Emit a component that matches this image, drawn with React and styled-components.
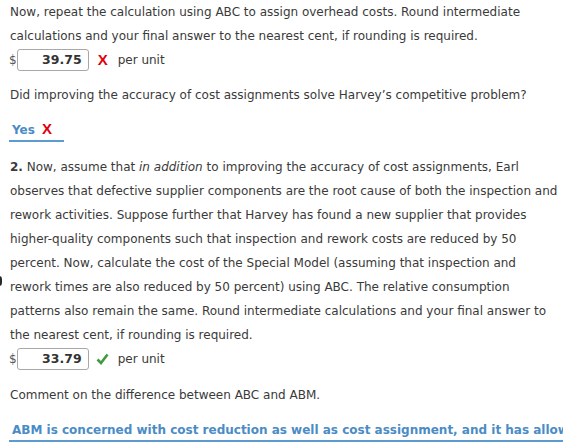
import React from "react";
import styled, { createGlobalStyle } from "styled-components";

const Global = createGlobalStyle`
  html, body { margin: 0; padding: 0; background: #fff; }
  body { overflow: hidden; }
`;

const Page = styled.div`
  position: relative;
  width: 563px;
  height: 447px;
  overflow: hidden;
  padding-left: 10px;
  box-sizing: border-box;
  font-family: "DejaVu Sans", Verdana, sans-serif;
  font-size: 12px;
  line-height: 24px;
  color: #3a3a3a;
`;

const Para = styled.p`
  margin: ${(p) => p.$mt || 0}px 0 0;
  white-space: nowrap;
`;

const AnswerRow = styled.div`
  display: flex;
  align-items: center;
  height: 24px;
  margin-left: -1px;
`;

const Dollar = styled.span`
  color: #555;
`;

const NumBox = styled.div`
  width: 70px;
  height: 20px;
  border: 1px solid #a8a8a8;
  border-radius: 3px;
  box-sizing: content-box;
  display: flex;
  align-items: center;
  justify-content: flex-end;
  font-weight: bold;
  font-size: 12.5px;
  color: #333;
  span { margin-right: 6px; }
`;

const Mark = styled.span`
  display: inline-flex;
  align-items: center;
  justify-content: center;
  width: ${(p) => p.$w || 14}px;
  margin-left: ${(p) => p.$ml || 7}px;
  color: #e0000b;
  font-family: "Liberation Sans", Arial, sans-serif;
  font-weight: bold;
  font-size: 15px;
`;

const Unit = styled.span`
  margin-left: 8px;
`;

const Choice = styled.div`
  margin-top: ${(p) => p.$mt || 0}px;
  margin-left: -1px;
  white-space: nowrap;
`;

const ChoiceText = styled.span`
  display: inline-block;
  line-height: 20px;
  padding: 0 ${(p) => p.$pr || 0}px 0 3px;
  border-bottom: 2px solid #5b9bd1;
  color: #4a8cc6;
  font-weight: bold;
  font-size: 12px;
`;

const Edge = styled.div`
  position: absolute;
  left: -4px;
  top: 276px;
  width: 6px;
  height: 10px;
  border-radius: 3px;
  background: #2a2a2a;
`;

const Check = () => (
  <svg width="13" height="12" viewBox="0 0 13 12">
    <path d="M1.5 6.5 L5 10 L11.5 1.5" fill="none" stroke="#3f9b3c" strokeWidth="2.6" strokeLinecap="butt" strokeLinejoin="miter" />
  </svg>
);

export default function App() {
  return (
    <>
      <Global />
      <Page>
        <Edge />
        <Para>
          Now, repeat the calculation using ABC to assign overhead costs. Round intermediate
          <br />
          calculations and your final answer to the nearest cent, if rounding is required.
        </Para>
        <AnswerRow>
          <Dollar>$</Dollar>
          <NumBox><span>39.75</span></NumBox>
          <Mark>X</Mark>
          <Unit>per unit</Unit>
        </AnswerRow>
        <Para $mt={11}>Did improving the accuracy of cost assignments solve Harvey’s competitive problem?</Para>
        <Choice $mt={11}>
          <ChoiceText $pr={11}>
            Yes <Mark $ml={2} $w={12}>X</Mark>
          </ChoiceText>
        </Choice>
        <Para $mt={13}>
          <b>2.</b> Now, assume that <i>in addition</i> to improving the accuracy of cost assignments, Earl
          <br />
          observes that defective supplier components are the root cause of both the inspection and
          <br />
          rework activities. Suppose further that Harvey has found a new supplier that provides
          <br />
          higher-quality components such that inspection and rework costs are reduced by 50
          <br />
          percent. Now, calculate the cost of the Special Model (assuming that inspection and
          <br />
          rework times are also reduced by 50 percent) using ABC. The relative consumption
          <br />
          patterns also remain the same. Round intermediate calculations and your final answer to
          <br />
          the nearest cent, if rounding is required.
        </Para>
        <AnswerRow>
          <Dollar>$</Dollar>
          <NumBox><span>33.79</span></NumBox>
          <Mark><Check /></Mark>
          <Unit>per unit</Unit>
        </AnswerRow>
        <Para $mt={12}>Comment on the difference between ABC and ABM.</Para>
        <Choice $mt={11}>
          <ChoiceText $pr={40}>
            ABM is concerned with cost reduction as well as cost assignment, and it has allowed
          </ChoiceText>
        </Choice>
      </Page>
    </>
  );
}
